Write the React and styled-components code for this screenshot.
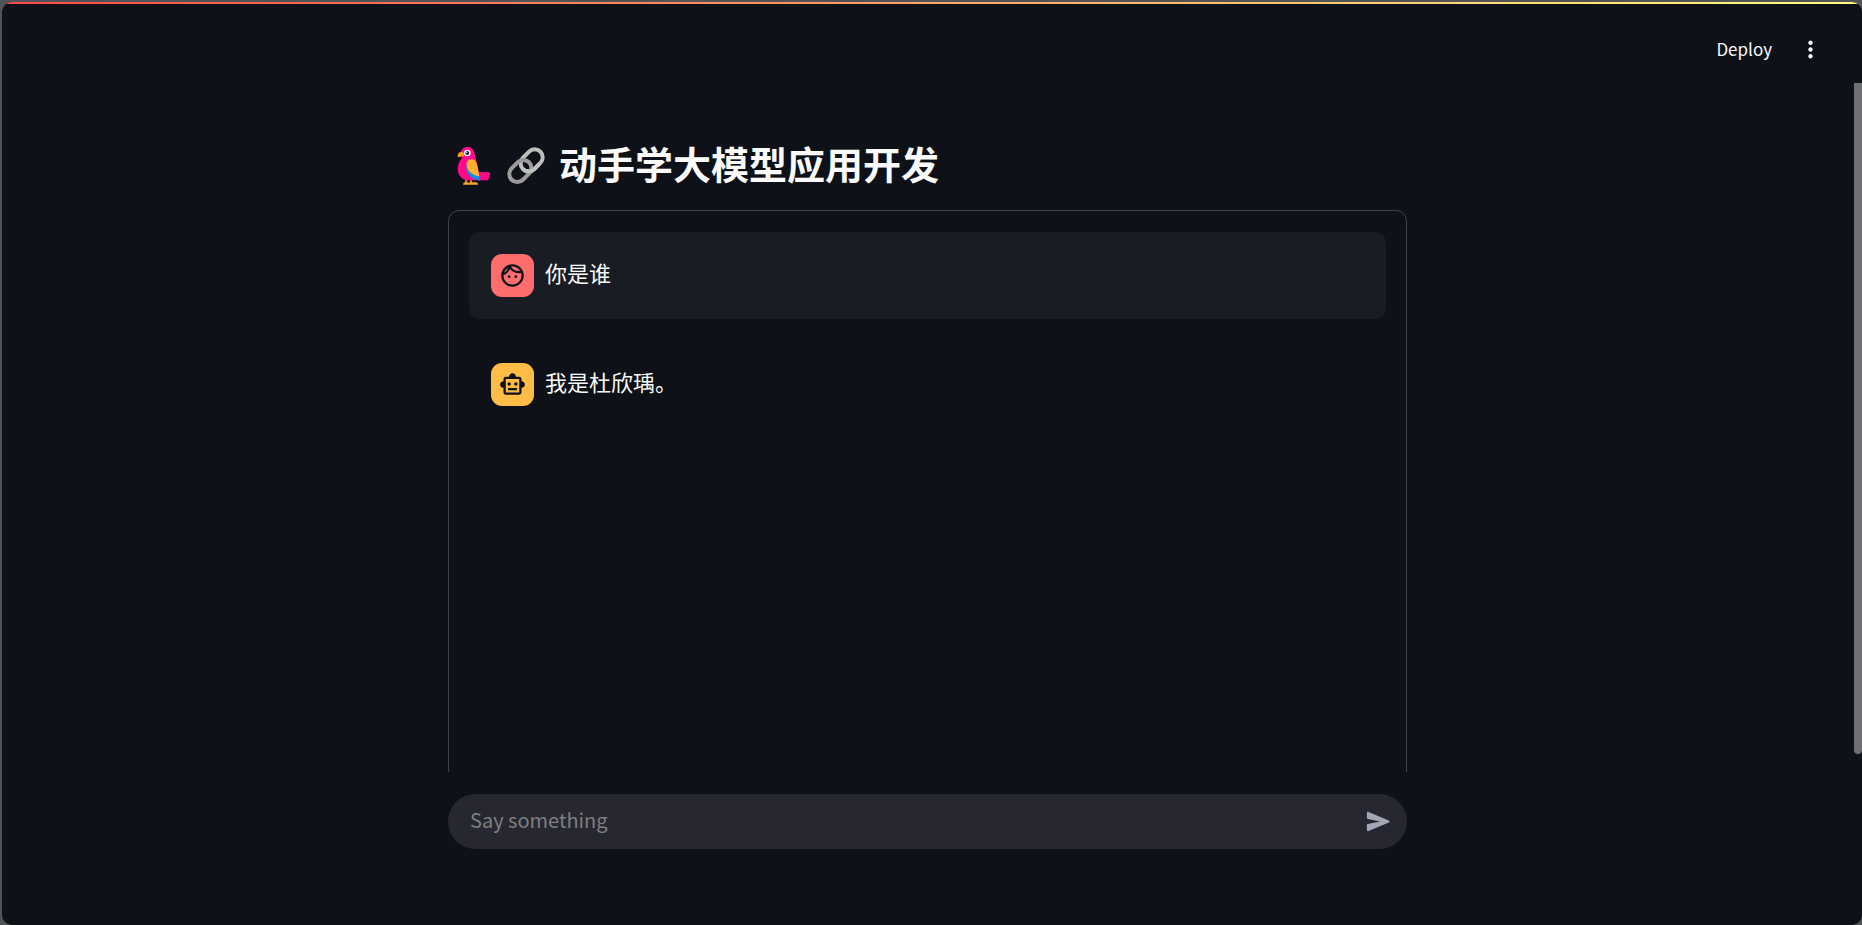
import React from 'react';
import styled, { createGlobalStyle } from 'styled-components';
import { MdOutlineFace, MdOutlineSmartToy, MdMoreVert } from 'react-icons/md';

const GlobalStyle = createGlobalStyle`
    * {
        box-sizing: border-box;
    }
    body {
        margin: 0;
        background-color: #525357;
        color: #fafafa;
        font-family: "Noto Sans CJK SC", "Noto Sans", sans-serif;
    }
`

const Page = styled.div`
    display: flex;
    flex-direction: column;
    height: 100vh;
    padding: 2px 0 0 2px;
`

const Window = styled.div`
    display: flex;
    flex-direction: column;
    flex: 1;
    min-height: 0;
    overflow: hidden;
    border-radius: 10px;
    background-color: #0e1117;
`

const Decoration = styled.div`
    flex: none;
    height: 2px;
    background-image: linear-gradient(90deg, #ff4b4b, #fffd80);
`

const Header = styled.header`
    display: flex;
    flex: none;
    align-items: center;
    justify-content: flex-end;
    gap: 25px;
    height: 79px;
    padding: 11px 38px 0 0;
`

const HeaderButton = styled.button`
    display: flex;
    align-items: center;
    padding: 0;
    border: none;
    background: none;
    color: #fafafa;
    font-family: inherit;
    font-size: 17px;
    line-height: 26px;
    cursor: pointer;
`

const Body = styled.div`
    display: flex;
    flex: 1;
    min-height: 0;
`

const Column = styled.div`
    display: flex;
    flex-direction: column;
    flex: 1;
    min-width: 0;
`

const Main = styled.main`
    flex: 1;
    min-height: 0;
    overflow: hidden;
`

const Block = styled.div`
    width: 100%;
    max-width: 959px;
    margin: 0 auto;
`

const Title = styled.h1`
    display: flex;
    align-items: center;
    gap: 14px;
    margin: 0;
    padding: 55px 0 17px 7px;
    font-size: 38px;
    font-weight: 700;
    line-height: 55px;
`

const TitleText = styled.span`
    padding-bottom: 5px;
    line-height: 50px;
`

const ChatBox = styled.section`
    display: flex;
    flex-direction: column;
    gap: 22px;
    height: 675px;
    padding: 21px 20px;
    border: 1px solid #404247;
    border-radius: 11px;
`

const MessageRow = styled.div`
    display: flex;
    align-items: flex-start;
    gap: 11px;
    padding: 22px;
    border-radius: 11px;
    background-color: ${props => props.$user ? "#1a1c24" : "transparent"};
`

const Avatar = styled.div`
    display: flex;
    align-items: center;
    justify-content: center;
    width: 43px;
    height: 43px;
    border-radius: 11px;
    background-color: ${props => props.$user ? "#ff6c6c" : "#ffbd45"};
    color: #0e1117;
`

const MessageText = styled.p`
    margin: 0;
    font-size: 22px;
    line-height: 36px;
`

const Bottom = styled.footer`
    flex: none;
    padding: 22px 0 76px;
`

const ChatForm = styled.form`
    display: flex;
    align-items: center;
    height: 55px;
    padding: 0 14px 0 22px;
    border-radius: 28px;
    background-color: #262730;
`

const ChatInput = styled.input`
    flex: 1;
    min-width: 0;
    padding: 0 0 4px;
    border: none;
    outline: none;
    background: none;
    color: #fafafa;
    font-family: inherit;
    font-size: 20px;
    line-height: 30px;
    &::placeholder {
        color: #7e7e83;
        opacity: 1;
    }
`

const SendButton = styled.button`
    display: flex;
    padding: 0;
    border: none;
    background: none;
    color: #a3a8b8;
    cursor: pointer;
`

const Scrollbar = styled.div`
    width: 9px;
    padding-left: 1px;
`

const Thumb = styled.div`
    height: 79.7%;
    border-radius: 0 0 4px 4px;
    background-color: #6f7074;
`

const Parrot = () => (
    <svg width="38" height="38" viewBox="45 50 114 114" aria-hidden="true">
        <path d="M75 148h6v9h-6zM90 148h6v9h-6z" fill="#e67a1e" />
        <path d="M69 163q0-7 7-7h9v7zM84 163q0-7 7-7h15q8 0 8 7z" fill="#ffa52e" />
        <path d="M62 69C64 57 71 50 82 50c13 0 20 8 22 21l13 54 29 1c3 0 5 2 4 5l-2 11c-1 5-5 8-10 8H86c-19 0-33-15-33-34 0-14 5-23 13-32z" fill="#ff0a8c" />
        <path d="M80 104c-4 19 8 42 39 47 0-10-1-17-4-27z" fill="#0a8fe8" />
        <path d="M94 87c11 0 16 8 18 20l6 31c-24-5-38-18-38-35 0-10 6-16 14-16z" fill="#ffb02e" />
        <path d="M54 81c-3-11 4-17 12-16 5 1 8 5 6 10-2 4-7 4-11 4-3 0-5 1-7 2z" fill="#ff9c24" />
        <circle cx="82" cy="68" r="10" fill="#fff" />
        <circle cx="82" cy="68" r="6" fill="#321b41" />
        <circle cx="80" cy="66" r="2" fill="#fff" />
    </svg>
)

// the light link passes over the dark one on its lower side only
const Chain = () => (
    <svg width="38" height="38" viewBox="201 50 114 114" fill="none" strokeWidth="12" aria-hidden="true">
        <rect x="-37" y="-24" width="74" height="48" rx="24" transform="translate(275 90) rotate(-45)" stroke="#bebebe" />
        <rect x="-37" y="-24" width="74" height="48" rx="24" transform="translate(241 122) rotate(-45)" stroke="#9b9b9b" />
        <path d="M-37 0A24 24 0 0 0 -13 24H8" transform="translate(275 90) rotate(-45)" stroke="#bebebe" />
    </svg>
)

const SendIcon = () => (
    <svg width="29" height="29" viewBox="0 0 24 24" fill="currentColor" aria-hidden="true">
        <path d="M2.400 5v4.100c0 .5.300.8.8.9L13.500 12l-10.300 2c-.5.1-.8.4-.8.9V19c0 .7.700 1.200 1.400.9l16.700-7c.8-.4.8-1.400 0-1.800L3.800 4.100c-.7-.3-1.400.2-1.400.9z" />
    </svg>
)

const messages = [
    { id: 1, role: "user", text: "你是谁" },
    { id: 2, role: "assistant", text: "我是杜欣瑀。" },
]

const Message = ({ message }) => {
    const isUser = message.role === "user"
    return (
        <MessageRow $user={isUser}>
            <Avatar $user={isUser}>
                {isUser ? <MdOutlineFace size={27} /> : <MdOutlineSmartToy size={27} />}
            </Avatar>
            <MessageText>{message.text}</MessageText>
        </MessageRow>
    )
}

const App = () => {
    return (
        <>
            <GlobalStyle />
            <Page>
                <Window>
                    <Decoration />
                    <Header>
                        <HeaderButton type="button">Deploy</HeaderButton>
                        <HeaderButton type="button" aria-label="Main menu"><MdMoreVert size={27} /></HeaderButton>
                    </Header>
                    <Body>
                        <Column>
                            <Main>
                                <Block>
                                    <Title><Parrot /><Chain /><TitleText>动手学大模型应用开发</TitleText></Title>
                                    <ChatBox>
                                        {messages.map(message => <Message key={message.id} message={message} />)}
                                    </ChatBox>
                                </Block>
                            </Main>
                            <Bottom>
                                <Block>
                                    <ChatForm onSubmit={(e) => { e.preventDefault() }}>
                                        <ChatInput type="text" placeholder="Say something" aria-label="Say something" />
                                        <SendButton type="submit" aria-label="Send"><SendIcon /></SendButton>
                                    </ChatForm>
                                </Block>
                            </Bottom>
                        </Column>
                        <Scrollbar><Thumb /></Scrollbar>
                    </Body>
                </Window>
            </Page>
        </>
    );
}

export default App;
